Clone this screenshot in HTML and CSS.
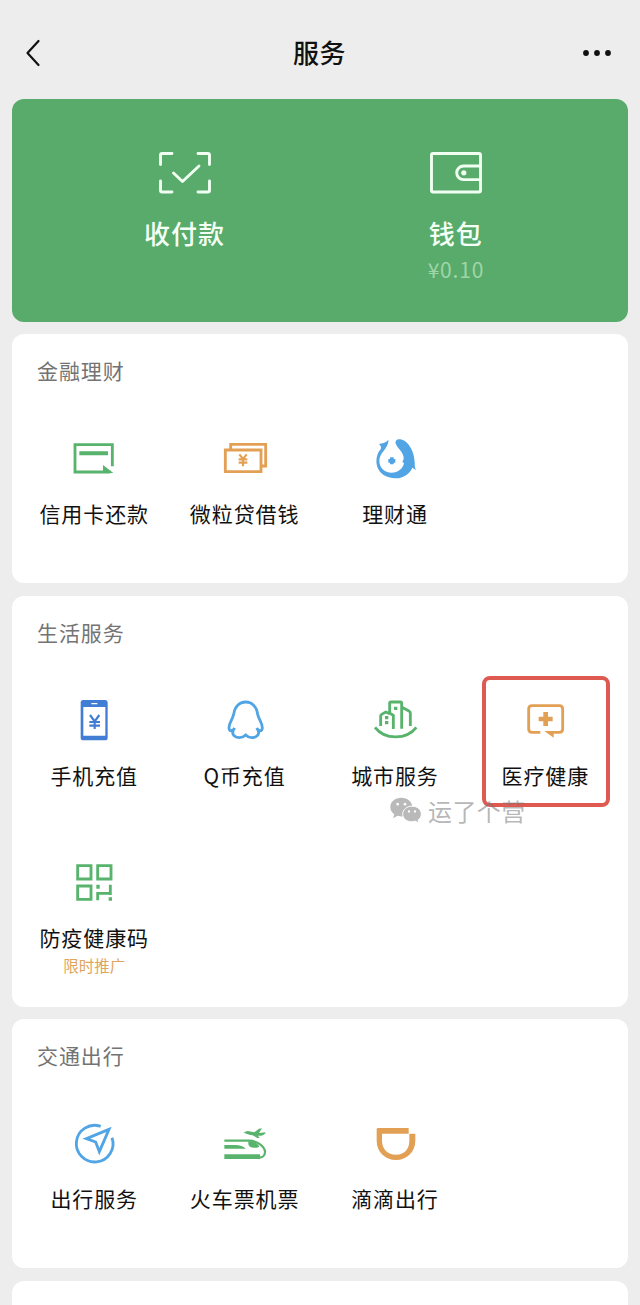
FILE: index.html
```html
<!DOCTYPE html>
<html lang="zh-CN">
<head>
<meta charset="utf-8">
<title>服务</title>
<link rel="stylesheet" href="styles.css">
</head>
<body>
<header class="navbar">
  <svg class="back" viewBox="0 0 16 30"><path d="M13.500 3L2.500 15l11 12"/></svg>
  <h1 class="page-title">服务</h1>
  <svg class="more" viewBox="0 0 30 8"><circle cx="4" cy="4" r="2.900"/><circle cx="15" cy="4" r="2.900"/><circle cx="26" cy="4" r="2.900"/></svg>
</header>
<main class="cards">
  <section class="pay-card">
    <div class="pay-item">
      <svg class="pay-icon" viewBox="0 0 54 44"><path d="M2.500 13.500V4Q2.500 2.500 4 2.500h10M40 2.500h10q1.500 0 1.500 1.500v9.500M51.500 30v9.500q0 1.500-1.500 1.500H40M14 41H4q-1.500 0-1.500-1.500V30M15.500 22l9 8.500L41 15"/></svg>
      <span class="pay-label">收付款</span>
    </div>
    <div class="pay-item">
      <svg class="pay-icon" viewBox="0 0 54 44"><rect x="2.500" y="2.500" width="49" height="38.500" rx="1.500"/><path d="M51 15H34.500a6.800 6.800 0 0 0 0 13.600H51"/><circle class="solid" cx="34.800" cy="21.800" r="2.600"/></svg>
      <span class="pay-label">钱包</span>
      <span class="balance">¥0.10</span>
    </div>
  </section>

  <section class="card">
    <h2 class="card-title">金融理财</h2>
    <div class="grid">
      <div class="item">
        <svg class="icon green" viewBox="0 0 144 144"><path class="line" d="M127 94V29H15v82h106"/><path class="fill" d="M99 90l31 24H99zM28 49h86v12H28z"/></svg>
        <span class="label">信用卡还款</span>
      </div>
      <div class="item">
        <svg class="icon orange" viewBox="0 0 144 144"><path class="line" d="M29 42V28h105v65h-12M13 45h107v65H13z"/><path class="line thin" d="M55 58l11 14 11-14M53 73h26M53 83h26M66 72v22"/></svg>
        <span class="label">微粒贷借钱</span>
      </div>
      <div class="item">
        <svg class="icon sky" viewBox="0 0 144 144"><path class="fill" d="M53 16C49 16 45 23 38 24L24 27C30 34 32 36 29 43C5 70 12 130 75 130C98 130 116 116 124 98L136 106C130 98 132 92 131 82C130 45 108 13 84 13C76 13 71 20 75 28C80 42 93 46 98 66C98 73 97 76 94 81L99 84C96 100 82 113 62 113C40 113 25 97 25 78C25 52 50 45 53 16z"/><path class="fill" d="M57 67h11v5h5v11h-5v5H57v-5h-5V72h5z"/></svg>
        <span class="label">理财通</span>
      </div>
    </div>
  </section>

  <section class="card tall">
    <h2 class="card-title">生活服务</h2>
    <div class="grid">
      <div class="item">
        <svg class="icon blue" viewBox="0 0 144 144"><path class="fill" fill-rule="evenodd" d="M40 9h65q8 0 8 8v105q0 8-8 8H40q-8 0-8-8V17q0-8 8-8zm0 21v86h66V30zM64 18v4h18v-4z"/><path class="line thin" d="M60 54l14 19 14-19M58 75h32M58 86h32M74 73v23"/></svg>
        <span class="label">手机充值</span>
      </div>
      <div class="item">
        <svg class="icon sky" viewBox="0 0 144 144"><path class="line" d="M41 93C36 103 24 105 24 92C24 78 34 68 38 52C41 30 54 15 74 15s33 15 36 37C114 68 124 78 124 92C124 105 112 103 107 93M37 100C30 114 44 122 56 122C64 122 69 119 74 114C79 119 84 122 92 122C104 122 118 114 111 100"/></svg>
        <span class="label">Q币充值</span>
      </div>
      <div class="item">
        <svg class="icon green" viewBox="0 0 144 144"><path class="line" d="M12 91c29 38 95 38 124 0M29 87V56q0-2 3-4l12-7 12 5M56 46V19q0-4 4-4h28q4 0 4 4v76M67 96V55L55 48M93 31l22 12q3 2 3 5v39"/><path class="fill" d="M69 29h10v10H69zM42 57h10v10H42zM42 72h10v10H42z"/></svg>
        <span class="label">城市服务</span>
      </div>
      <div class="item highlighted">
        <svg class="icon orange" viewBox="0 0 144 144"><path class="line" d="M58 106H33q-10 0-10-10V36q0-10 10-10h82q10 0 10 10v60q0 10-10 10H84"/><path class="fill" d="M70 102h28v20zM67 45h14v14h14v14H81v14H67V73H53V59h14z"/></svg>
        <span class="label">医疗健康</span>
      </div>
      <div class="item">
        <svg class="icon green" viewBox="0 0 144 144"><path class="line" d="M23 20h40v40H23zM83 20h40v40H83zM23 81h40v40H23zM83 124v-21h40M121 77v31"/><path class="fill" d="M79 77h10v12H79zM116 115h10v10h-10z"/></svg>
        <span class="label">防疫健康码</span>
        <span class="promo">限时推广</span>
      </div>
    </div>
    <div class="watermark">
      <svg class="wechat" viewBox="0 0 96 80"><path class="bubble" d="M34 2C15 2 1 14 1 30c0 9 5 16 12 21l-4 12 14-7 11 2C52 58 67 46 67 30S52 2 34 2z"/><path class="bubble front" d="M66 27c16 0 28 10 28 24 0 7-4 14-10 18l3 9-11-6-10 2c-16 0-28-10-28-23s12-24 28-24z"/><g class="eyes"><circle cx="23" cy="21" r="4"/><circle cx="45" cy="21" r="4"/><circle cx="57" cy="43" r="3.500"/><circle cx="75" cy="43" r="3.500"/></g></svg>
      <span>运了个营</span>
    </div>
  </section>

  <section class="card">
    <h2 class="card-title">交通出行</h2>
    <div class="grid">
      <div class="item">
        <svg class="icon sky" viewBox="0 0 144 144"><path class="line" d="M92 19a55 55 0 1 0 34 34"/><path class="line" d="M117 28L49 56l28 10 11 29z"/></svg>
        <span class="label">出行服务</span>
      </div>
      <div class="item">
        <svg class="icon green" viewBox="0 0 144 144"><path class="line thin" d="M10 62h75c21 0 47 17 47 34 0 11-8 17-18 17"/><path class="fill" d="M10 103h107v14H10zM10 75h32c14 0 26 4 32 11H10zM82 64c15 0 29 6 33 16-12 6-31 5-33-7zM68 37l12-4 20 4 14-11 9-1-9 14 20-2c-2 7-8 10-16 10h-8l7 6-8 1-14-8c-10-1-19-4-27-9z"/></svg>
        <span class="label">火车票机票</span>
      </div>
      <div class="item">
        <svg class="icon orange" viewBox="0 0 144 144"><path class="fill" fill-rule="evenodd" d="M21 24h92v17h20v21c0 33-25 58-58 58S17 95 17 62V28q0-4 4-4zm12 17v21c0 25 17 42 42 42s40-17 40-42V41z"/></svg>
        <span class="label">滴滴出行</span>
      </div>
    </div>
  </section>
  <section class="card next"></section>
</main>
</body>
</html>
```
FILE: styles.css
```css
*, *::after { box-sizing: border-box; }
body {
  margin: 0;
  height: 1305px;
  overflow: hidden;
  background: #ededed;
  color: #111;
  font-family: "Noto Sans CJK SC", sans-serif;
}
svg { display: block; flex: none; }
h1, h2 { margin: 0; }

.navbar {
  height: 99px;
  padding: 6px 28px 0 25px;
  display: flex;
  align-items: center;
  justify-content: space-between;
}
.back { width: 16px; height: 30px; margin-right: 16px; }
.back path {
  fill: none;
  stroke: #111;
  stroke-width: 2.2;
  stroke-linecap: round;
  stroke-linejoin: round;
}
.page-title {
  margin-bottom: 1px;
  font-size: 26px;
  line-height: 38px;
  font-weight: 500;
  letter-spacing: .5px;
}
.more { width: 30px; height: 8px; fill: #111; }

.cards {
  display: flex;
  flex-direction: column;
  gap: 12.5px;
  padding: 0 12.5px 0 12px;
}
.pay-card {
  height: 222.5px;
  padding: 52px 36px 0 37px;
  display: flex;
  border-radius: 12px;
  background: #58ab6b;
  color: #f4fff5;
}
.pay-item { flex: 1; display: flex; flex-direction: column; align-items: center; }
.pay-icon {
  width: 54px;
  height: 44px;
  fill: none;
  stroke: #f0fff2;
  stroke-width: 2.9;
  stroke-linecap: round;
  stroke-linejoin: round;
}
.pay-icon .solid { fill: #f0fff2; stroke: none; }
.pay-label {
  margin-top: 18.5px;
  font-size: 26px;
  line-height: 38px;
  font-weight: 500;
  letter-spacing: 1px;
}
.balance {
  margin-top: 3px;
  font: 21px/28px "Noto Sans CJK SC", sans-serif;
  letter-spacing: .8px;
  color: #a0d5a8;
}

.card {
  position: relative;
  height: 249px;
  padding: 20px 6.5px 0 7px;
  border-radius: 12px;
  background: #fff;
}
.card.tall { height: 411px; }
.card-title {
  padding-left: 18px;
  font-size: 21px;
  line-height: 32px;
  font-weight: 400;
  letter-spacing: .9px;
  color: #737373;
}
.grid {
  display: grid;
  grid-template-columns: repeat(4, 150.4px);
  grid-auto-rows: 162px;
  padding-top: 49px;
}
.item {
  position: relative;
  display: flex;
  flex-direction: column;
  align-items: center;
}
.icon { width: 48px; height: 48px; color: #58b36c; }
.icon.orange { color: #e2a055; }
.icon.sky { color: #51a5e5; }
.icon.blue { color: #427dd5; }
.line { fill: none; stroke: currentColor; stroke-width: 8.5; }
.line.thin { stroke-width: 6.5; }
.fill { fill: currentColor; }
.label {
  margin-top: 14px;
  font-size: 21px;
  line-height: 32px;
  letter-spacing: .9px;
  white-space: nowrap;
}
.promo { margin-top: 1px; font-size: 15.5px; line-height: 22px; color: #dfa55c; }
.highlighted::after {
  content: "";
  position: absolute;
  top: -21px;
  left: 12px;
  width: 128px;
  height: 131px;
  border: 4px solid #de5950;
  border-radius: 8px;
}
.watermark {
  position: absolute;
  left: 378px;
  top: 197px;
  display: flex;
  align-items: center;
  gap: 6px;
  font-size: 24px;
  line-height: 36px;
  letter-spacing: .4px;
  color: rgba(120, 120, 120, .55);
}
.wechat { width: 32px; height: 27px; }
.bubble { fill: #b9b9b9; }
.bubble.front { stroke: #fff; stroke-width: 3; }
.eyes { fill: #fff; }
.card.next { height: 60px; }
```
